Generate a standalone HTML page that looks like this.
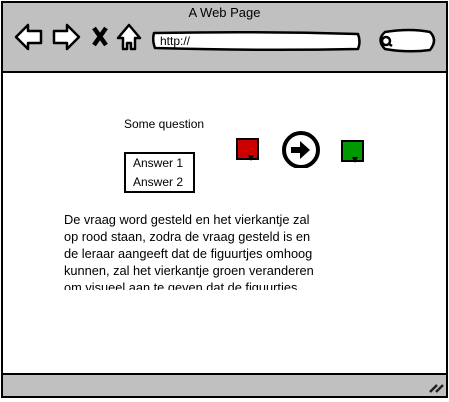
<!DOCTYPE html>
<html><head><style>
body{margin:0;width:449px;height:402px;background:#fff;position:relative;overflow:hidden;font-family:"Liberation Sans",sans-serif;color:#000}
.a{position:absolute}
</style></head><body>
<div class="a" style="left:1px;top:1px;width:443px;height:393px;border:2px solid #000;background:#fff"></div>
<div class="a" style="left:3px;top:3px;width:443px;height:68px;background:#c0c0c0;border-bottom:2px solid #000"></div>
<div class="a" style="left:3px;top:373px;width:443px;height:21px;background:#c0c0c0;border-top:2px solid #000"></div>
<div class="a" style="left:0;top:5px;width:449px;text-align:center;font-size:13px">A Web Page</div>
<svg class="a" style="left:0;top:0" width="449" height="80">
<g fill="#fff" stroke="#000" stroke-width="2.5" stroke-linejoin="round">
<path d="M16 37 L28 25 L28 31 L41 31 L41 43 L28 43 L28 49 Z"/>
<path d="M79 37 L67 25 L67 31 L54 31 L54 43 L67 43 L67 49 Z"/>
<path d="M118 38 L129 25 L140 38 L135 38 L135 49 L131 49 L131 43 L127 43 L127 49 L123 49 L123 38 Z"/>
<path d="M154 33 Q260 31 358 34 Q361 42 358 49 Q260 51 155 48 Q152 40 154 33Z"/>
<path d="M385 32 Q410 28 430 32 Q438 40 430 50 Q408 53 385 49 Q376 40 385 32Z"/>
</g>
<path d="M94 28 L106 45 M106 28 L94 45" stroke="#000" stroke-width="4.5"/>
<circle cx="386" cy="41" r="4" fill="none" stroke="#000" stroke-width="2.5"/>
<path d="M389 44 L392 46" stroke="#000" stroke-width="2.5"/>
</svg>
<div class="a" style="left:160px;top:34px;font-size:12px">http://</div>
<svg class="a" style="left:0;top:0" width="449" height="402">
<path d="M430 392 L437 385 M436 392 L443 385" stroke="#222" stroke-width="2.5"/>
</svg>
<div class="a" style="left:124px;top:117px;font-size:12px">Some question</div>
<div class="a" style="left:124px;top:152px;border:2px solid #000;font-size:12px;line-height:19px;padding-left:7px;box-sizing:border-box;width:71px;height:41px">Answer 1<br>Answer 2</div>
<svg class="a" style="left:230px;top:128px" width="140" height="40">
<rect x="7" y="11" width="21" height="20" fill="#c00" stroke="#000" stroke-width="2"/>
<path d="M18 27 L24 27 L21 33Z" fill="#000"/>
<rect x="112" y="13" width="21" height="20" fill="#090" stroke="#000" stroke-width="2"/>
<path d="M122 29 L128 29 L125 35Z" fill="#000"/>
<circle cx="71" cy="22" r="17" fill="#fff" stroke="#000" stroke-width="4"/>
<path d="M61 19 L70 19 L70 13 L80 22 L70 31 L70 25 L61 25Z" fill="#000"/>
</svg>
<div class="a" style="left:64px;top:211px;width:300px;height:79px;overflow:hidden;font-size:12.8px;line-height:17px;white-space:nowrap">De vraag word gesteld en het vierkantje zal<br>op rood staan, zodra de vraag gesteld is en<br>de leraar aangeeft dat de figuurtjes omhoog<br>kunnen, zal het vierkantje groen veranderen<br>om visueel aan te geven dat de figuurtjes</div>
</body></html>
